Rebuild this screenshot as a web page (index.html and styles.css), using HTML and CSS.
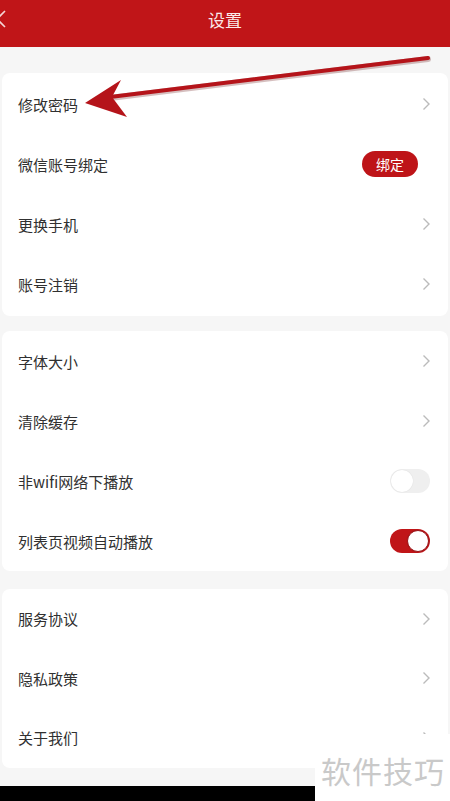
FILE: index.html
```html
<!DOCTYPE html>
<html>
  <head>
    <meta charset="utf-8">
    <link rel="stylesheet" href="styles.css">
  </head>
  <body>
    <div class="screen">
      <div class="topbar">
        <svg class="back" width="12" height="20" viewBox="0 0 12 20"><path d="M9 2 L1 10 L9 18" fill="none" stroke="#f4d6d6" stroke-width="1.6"/></svg>
        <span class="title">设置</span>
      </div>

      <div class="card first">
        <div class="row"><span>修改密码</span><svg class="chev" width="9" height="14" viewBox="0 0 9 14"><path d="M1.5 1.5 L7 7 L1.5 12.5" /></svg></div>
        <div class="row"><span>微信账号绑定</span><span class="bind">绑定</span></div>
        <div class="row"><span>更换手机</span><svg class="chev" width="9" height="14" viewBox="0 0 9 14"><path d="M1.5 1.5 L7 7 L1.5 12.5" /></svg></div>
        <div class="row"><span>账号注销</span><svg class="chev" width="9" height="14" viewBox="0 0 9 14"><path d="M1.5 1.5 L7 7 L1.5 12.5" /></svg></div>
      </div>

      <div class="card">
        <div class="row"><span>字体大小</span><svg class="chev" width="9" height="14" viewBox="0 0 9 14"><path d="M1.5 1.5 L7 7 L1.5 12.5" /></svg></div>
        <div class="row"><span>清除缓存</span><svg class="chev" width="9" height="14" viewBox="0 0 9 14"><path d="M1.5 1.5 L7 7 L1.5 12.5" /></svg></div>
        <div class="row"><span>非wifi网络下播放</span><span class="switch"></span></div>
        <div class="row"><span>列表页视频自动播放</span><span class="switch on"></span></div>
      </div>

      <div class="card last">
        <div class="row"><span>服务协议</span><svg class="chev" width="9" height="14" viewBox="0 0 9 14"><path d="M1.5 1.5 L7 7 L1.5 12.5" /></svg></div>
        <div class="row"><span>隐私政策</span><svg class="chev" width="9" height="14" viewBox="0 0 9 14"><path d="M1.5 1.5 L7 7 L1.5 12.5" /></svg></div>
        <div class="row"><span>关于我们</span><svg class="chev" width="9" height="14" viewBox="0 0 9 14"><path d="M1.5 1.5 L7 7 L1.5 12.5" /></svg></div>
      </div>

      <div class="footer"><div class="blackbar"></div></div>

      <!-- annotation arrow over the list -->
      <svg class="pointer" width="450" height="140" viewBox="0 0 450 140">
        <line x1="428" y1="59" x2="110" y2="98" stroke="rgba(90,0,0,0.25)" stroke-width="6" stroke-linecap="round"/>
        <line x1="428" y1="58" x2="110" y2="97" stroke="#b5141a" stroke-width="4" stroke-linecap="round"/>
        <path d="M85 103 L121 80 L112 97 L127 117 Z" fill="#b5141a"/>
      </svg>

      <div class="watermark">软件技巧</div>
    </div>
  </body>
</html>
```

FILE: styles.css
```css
html, body {
  margin: 0;
  padding: 0;
}

body {
  font-family: "Noto Sans CJK SC", "Noto Sans", sans-serif;
  background: #f6f6f6;
  color: #303030;
}

.screen {
  position: relative;
  width: 450px;
  height: 801px;
  overflow: hidden;
  display: flex;
  flex-direction: column;
}

.topbar {
  height: 47px;
  background: #c01518;
  display: flex;
  align-items: center;
  justify-content: center;
  position: relative;
}

.topbar .title {
  color: #fbeaea;
  font-size: 17px;
  margin-top: -9px;
}

.back {
  position: absolute;
  left: -4px;
  top: 9px;
}

.card {
  background: #fff;
  margin: 15px 2px 0;
  border-radius: 8px;
}

.card.first {
  margin-top: 26px;
  padding: 1px 0 2px;
}

.card.last {
  margin-top: 18px;
}

.card.last .row {
  height: 59.5px;
}

.row {
  height: 60px;
  display: flex;
  align-items: center;
  justify-content: space-between;
  padding: 0 18px 0 16px;
  font-size: 15px;
}

.chev {
  fill: none;
  stroke: #bbb;
  stroke-width: 1.4;
  margin-right: -1px;
}

.bind {
  background: #be1418;
  color: #fff;
  font-size: 14px;
  width: 56px;
  height: 26px;
  line-height: 26px;
  text-align: center;
  border-radius: 13px;
  margin-right: 12px;
}

.switch {
  width: 40px;
  height: 24px;
  border-radius: 12px;
  background: #efefef;
  position: relative;
}

.switch:after {
  content: "";
  position: absolute;
  left: 1px;
  top: 1px;
  width: 22px;
  height: 22px;
  border-radius: 50%;
  background: #fff;
  box-shadow: 0 0 1px rgba(0, 0, 0, 0.15);
}

.switch.on {
  background: #c01518;
}

.switch.on:after {
  left: 17px;
  border: 1px solid #9a1216;
  width: 20px;
  height: 20px;
}

.footer {
  flex: 1;
  display: flex;
  flex-direction: column;
  justify-content: flex-end;
}

.blackbar {
  height: 15px;
  width: 315px;
  background: #000;
}

.pointer {
  position: absolute;
  left: 0;
  top: 0;
}

.watermark {
  position: absolute;
  left: 315px;
  top: 734px;
  width: 135px;
  height: 67px;
  background: #fff;
  color: #c9c9c9;
  font-size: 30px;
  line-height: 30px;
  padding: 21px 0 0 6px;
  box-sizing: border-box;
  letter-spacing: 1px;
}
```
